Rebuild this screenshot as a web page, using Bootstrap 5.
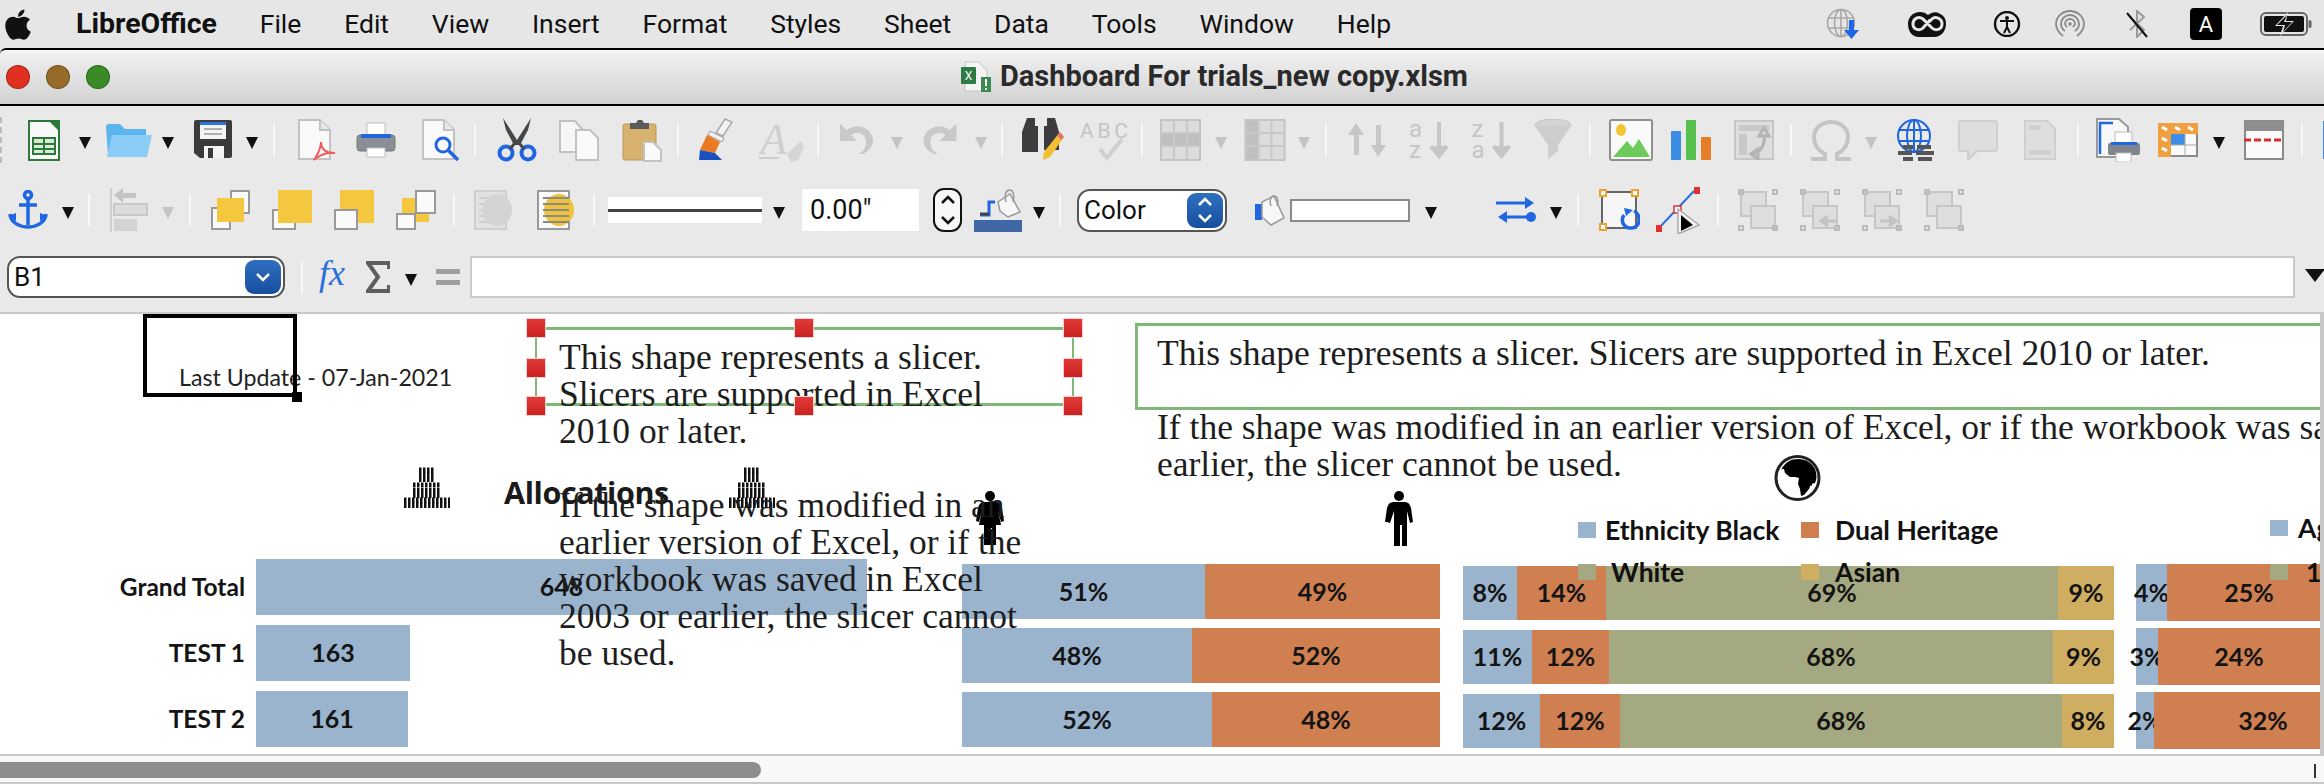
<!DOCTYPE html>
<html lang="en"><head><meta charset="utf-8"><title>Dashboard For trials_new copy.xlsm</title>
<link href="https://cdn.jsdelivr.net/npm/bootstrap@5.3.0/dist/css/bootstrap.min.css" rel="stylesheet">
<style>
html,body{margin:0;height:784px;overflow:hidden;background:#e9e9e9}
body{font-family:Roboto,"Liberation Sans",sans-serif;color:#111}
.mac-bar{height:48px;background:#e6e6e6;padding-left:5px;font-size:26.5px;position:relative}
.mac-bar .apple{margin-right:45px}
.menu-items{gap:42.8px;line-height:48px}
.brand-name{font-weight:700;font-size:28.500px}
.tray{position:absolute;top:0;right:0;height:48px;display:grid;grid-template-columns:81px 86px 62px 70px 65px 70px 64px;align-items:center}
.win-title{height:58px;border-top:2px solid #000;border-bottom:2px solid #000;background:linear-gradient(#f6f6f6 0,#efefef 8%,#d2d2d2 100%);padding-left:6px;border-top-left-radius:6px}
.win-title .lights{gap:16px;margin-right:851px}
.dot{width:24px;height:24px;border-radius:50%;border:1px solid rgba(0,0,0,.25)}
.dot-r{background:#e0301f}.dot-y{background:#966b29}.dot-g{background:#3a8a26}
.doc-name{font-size:29px;font-weight:700;color:#2a2a2a;margin-left:8px;white-space:nowrap}
.tbar{display:grid;align-items:center;justify-items:start;background:#e9e9e9}
.tbar-a{height:68px;grid-template-columns:28px 51px 27px 56px 32px 52px 27px 25px 58px 66px 52px 23px 62px 63px 55px 21px 61px 58px 21px 53px 31px 53px 26px 21px 58px 61px 19px 55px 29px 54px 27px 23px 61px 62px 63px 55px 20px 62px 63px 56px 20px 55px 31px 62px 66px 53px 19px 62px 55px 31px 57px 22px 1px}
.tbar-b{height:72px;padding-left:8px;grid-template-columns:54px 26px 22px 52px 27px 22px 61px 62px 62px 57px 21px 63px 56px 15px 165px 29px 131px 41px 59px 26px 18px 177px 36px 135px 71px 54px 27px 22px 57px 61px 21px 62px 62px 62px 41px}
.tbar-c{height:66px;padding-left:7px;padding-bottom:4px;grid-template-columns:294px 18px 47px 39px 31px 34px 1835px 19px}
.grip{width:2px;height:46px;border-left:2px dashed #bbb}
.sep{width:2px;height:32px;background:#f8f8f8;display:block}
.drop{width:0;height:0;border-left:6.5px solid transparent;border-right:6.5px solid transparent;border-top:12px solid #111;display:block;margin-top:6px}
.drop.is-off{border-top-color:#c4c4c4}
.drop.is-big{border-left-width:10px;border-right-width:10px;border-top-width:13px;margin-top:-4px}
.line-pick{width:154px;height:26px;background:#fff;display:flex;align-items:center}
.line-pick i{display:block;width:100%;height:3px;background:#444}
.num-field{width:117px;height:42px;background:#fff;font-size:27px;line-height:42px;padding-left:8px}
.spin{width:29px;height:44px;border:2px solid #111;border-radius:11px;background:#f7f7f7}
.pick-box{width:278px;height:42px;border:2px solid #555;border-radius:13px;background:#fff;font-size:26px;padding-left:5px;position:relative;display:flex;align-items:center}
.pick-color{width:150px;height:43px}
.pick-btn{position:absolute;right:2px;top:2px;bottom:2px;width:36px;background:linear-gradient(#2f6fc0,#174f9e);border-radius:9px;display:flex;align-items:center;justify-content:center}
.color-well{width:120px;height:23px;background:#fff;border:2px solid #8a8a8a}
.fx-field{width:1825px;height:42px;background:#fff;border:2px solid #c9c9c9;border-radius:0}
.sheet{height:442px;background:#fff;border-top:2px solid #c8c8c8;border-right:4px solid #c8c8c8;position:relative;overflow:hidden;color:#1a1a1a}
.hscroll{height:30px;background:#f8f8f8;border-top:2px solid #c8c8c8;border-bottom:2px solid #c8c8c8;padding-top:6px;position:relative}
.hscroll-thumb{width:761px;height:16px;background:#8e8e8e;border-radius:0 8px 8px 0}
.hscroll-end{position:absolute;right:8px;top:8px;width:2px;height:14px;background:#333}
.cal{font-family:Lato,"Open Sans",sans-serif}
.upd-box{position:absolute;left:143px;top:0;width:154px;height:83px;border:4px solid #000}
.upd-grip{position:absolute;left:292px;top:78px;width:10px;height:10px;background:#000}
.upd-text{position:absolute;left:179px;top:50px;font-size:23.2px;line-height:26px;white-space:nowrap;color:#222}
.rte{font-family:"Liberation Serif",serif;font-size:35.500px;line-height:37px;position:absolute;white-space:nowrap;color:#1d1d1d}
.rte-a{left:559px;top:25px}
.rte-b{left:1157px;top:21px}
.slicer-frame{position:absolute;border:3px solid #80b878;pointer-events:none}
.frame-a{left:535px;top:13px;width:539px;height:79px;border-left-width:2px;border-right-width:2px}
.frame-b{left:1135px;top:9px;width:1300px;height:87px}
.knob{position:absolute;width:20px;height:20px;background:linear-gradient(#e23a36,#c92222);border:1px solid #f7d0d0}
.kx1{left:526px}.kx2{left:794px}.kx3{left:1063px}
.ky1{top:4px}.ky2{top:44px}.ky3{top:82px}
.alloc-head{position:absolute;left:504px;top:158px;font-family:"Open Sans",sans-serif;font-weight:700;font-size:30.5px;line-height:40px;letter-spacing:-.4px}
.glyph{position:absolute}
.g-p1{left:404px;top:153px}.g-p2{left:729px;top:153px}.g-f{left:976px;top:177px}.g-m{left:1385px;top:177px}.g-w{left:1774px;top:141px}
.legend-item{position:absolute;display:flex;align-items:center;font-family:Lato,sans-serif;font-weight:700;font-size:26.5px;line-height:28px;white-space:nowrap;color:#111}
.swatch{width:18px;height:16px;display:block;flex:none}
.l1{left:1578px;top:202px;gap:9px}.l2{left:1801px;top:202px;gap:16px}.l3{left:1578px;top:244px;gap:15px}.l4{left:1801px;top:244px;gap:16px}.l5{left:2270px;top:200px;gap:10px}.l6{left:2270px;top:244px;gap:18px}
.c-blue{background:#9ab4ce}.c-orange{background:#d08050}.c-green{background:#a5a982}.c-gold{background:#cfae62}
.chart{position:absolute;display:flex;flex-direction:column;font-family:Lato,sans-serif;font-weight:700;font-size:25px;color:#141414}
.ch-alloc{left:256px;top:245px;gap:10px}
.ch-gender{left:962px;top:250px;gap:9px}
.ch-eth{left:1463px;top:252px;gap:10px}
.ch-age{left:2136px;top:250px;gap:7px}
.bar-row{display:flex;position:relative}
.ch-alloc .bar-row{height:56px}.ch-gender .bar-row{height:55px}.ch-eth .bar-row{height:54px}.ch-age .bar-row{height:57px}
.seg{display:flex;align-items:center;justify-content:center;white-space:nowrap;flex:none;height:100%}
.row-tag{position:absolute;right:100%;margin-right:11px;top:0;height:100%;display:flex;align-items:center;white-space:nowrap;font-size:24.5px}
</style></head>
<body>
<header class="mac-bar d-flex align-items-center">
 <svg class="apple" width="26" height="31" viewBox="0 0 384 450"><path fill="#111" transform="translate(0,-30)" d="M318.7 268.7c-.2-36.7 16.4-64.4 50-84.8-18.8-26.9-47.2-41.7-84.7-44.6-35.5-2.8-74.3 20.7-88.5 20.7-15 0-49.4-19.7-76.4-19.7C63.3 141.2 4 184.8 4 273.5q0 39.3 14.4 81.2c12.8 36.7 59 126.7 107.2 125.2 25.2-.6 43-17.9 75.8-17.9 31.8 0 48.3 17.9 76.4 17.9 48.6-.7 90.4-82.5 102.6-119.3-65.2-30.7-61.7-90-61.7-91.9zm-56.6-164.2c27.3-32.4 24.8-61.9 24-72.5-24.1 1.4-52 16.4-67.9 34.9-17.5 19.8-27.8 44.3-25.6 71.9 26.1 2 49.9-11.4 69.5-34.3z"/></svg>
 <nav class="menu-items d-flex">
  <span class="brand-name">LibreOffice</span><span>File</span><span>Edit</span><span>View</span><span>Insert</span><span>Format</span><span>Styles</span><span>Sheet</span><span>Data</span><span>Tools</span><span>Window</span><span>Help</span>
 </nav>
 <div class="tray">
  <svg width="33" height="32" viewBox="0 0 33 32"><g fill="none" stroke="#a8a8a8" stroke-width="1.6"><circle cx="15" cy="15" r="13.5"/><ellipse cx="15" cy="15" rx="6.5" ry="13.5"/><path d="M2 10h26M2 20h26M15 1v28"/></g><path d="M23 12h5v10h5l-7.500 9-7.500-9h5z" fill="#1f66e5"/></svg>
  <svg width="40" height="30" viewBox="0 0 40 30"><path fill="#111" d="M13 3a11 11 0 0 1 8 3 11 11 0 0 1 18 9c0 7-5 13-12 13H12C5 28 1 22 1 15S6 3 13 3z"/><path fill="none" stroke="#e6e6e6" stroke-width="3" d="M23 11l-7 8c-3 3-10 2-10-4 0-6 6-8 10-5l9 9c3 3 10 2 10-4 0-6-7-8-10-5l-3 3"/></svg>
  <svg width="28" height="26" viewBox="0 0 28 26"><circle cx="14" cy="13" r="12" fill="none" stroke="#111" stroke-width="2.4"/><circle cx="14" cy="7" r="2" fill="#111"/><path d="M7 10h14M14 10v6l-3 6M14 16l3 6" stroke="#111" stroke-width="2" fill="none"/></svg>
  <svg width="30" height="28" viewBox="0 0 30 28"><g fill="none" stroke="#8a8a8a" stroke-width="1.8"><path d="M8 26C3 22 1 18 1 14a14 13 0 0 1 28 0c0 4-2 8-7 12"/><path d="M10 21c-3-2-4-5-4-7a9 9 0 0 1 18 0c0 2-1 5-4 7"/><path d="M12 17c-1-1-2-2-2-3a5 5 0 0 1 10 0c0 1-1 2-2 3"/></g><circle cx="15" cy="14" r="1.800" fill="#8a8a8a"/></svg>
  <svg width="24" height="28" viewBox="0 0 24 28"><path d="M5 7l14 13-7 7V1l7 6L5 20" fill="none" stroke="#9a9a9a" stroke-width="2"/><path d="M2 3l20 24" stroke="#111" stroke-width="2"/></svg>
  <svg width="32" height="32" viewBox="0 0 32 32"><rect width="32" height="32" rx="4" fill="#000"/><text x="16" y="24" fill="#fff" font-size="22" text-anchor="middle" font-family="Roboto">A</text></svg>
  <svg width="52" height="24" viewBox="0 0 52 24"><rect x="1" y="1" width="46" height="22" rx="5" fill="none" stroke="#666" stroke-width="2"/><rect x="4" y="4" width="40" height="16" rx="2" fill="#111"/><rect x="48.500" y="8" width="3" height="8" rx="1.500" fill="#666"/><path d="M28 0L15 14h8l-3 10 14-15h-8z" fill="#e6e6e6"/><path d="M27 3l-10 10h8l-2 7 9-10h-8z" fill="#111"/></svg>
 </div>
</header>
<div class="win-title d-flex align-items-center">
 <div class="lights d-flex"><span class="dot dot-r"></span><span class="dot dot-y"></span><span class="dot dot-g"></span></div>
 <svg width="31" height="32" viewBox="0 0 31 32"><path d="M4 1h14l8 9v20H4z" fill="#f4f4f4" stroke="#c4c4c4"/><rect y="6" width="15" height="17" rx="1" fill="#2d7a44"/><text x="7.500" y="19" fill="#fff" font-size="12" text-anchor="middle" font-family="Roboto">X</text><rect x="20" y="16" width="10" height="15" fill="#3d8a50"/><path d="M25 18v7M25 27v2" stroke="#fff" stroke-width="2"/></svg>
 <span class="doc-name">Dashboard For trials_new copy.xlsm</span>
</div>

<!-- first toolbar -->
<div class="tbar tbar-a">
 <span class="grip"></span>
 <svg width="32" height="41" viewBox="0 0 32 41"><path d="M1 1h22l8 8v31H1z" fill="#f8f8f8" stroke="#2b7a3a" stroke-width="2"/><path d="M20 0h12v12z" fill="#2b7a3a"/><path d="M5 18h22v16H5z" fill="#d9ead6" stroke="#2b7a3a" stroke-width="2"/><path d="M5 24h22M5 29h22M16 18v16" stroke="#2b7a3a" stroke-width="2"/></svg>
 <span class="drop"></span>
 <svg width="46" height="34" viewBox="0 0 46 34"><path d="M0 4a3 3 0 0 1 3-3h11l5 5h21v26H2z" fill="#5db5f0"/><path d="M6 12h40l-5 22H1z" fill="#8ccdf8"/></svg>
 <span class="drop"></span>
 <svg width="38" height="40" viewBox="0 0 38 40"><path d="M2 0h34a2 2 0 0 1 2 2v34a2 2 0 0 1-2 2H6l-6-5V2a2 2 0 0 1 2-2z" fill="#3b3b3b"/><rect x="6" y="2" width="26" height="17" fill="#f4f4f4"/><rect x="6" y="2" width="26" height="3" fill="#2c74dc"/><path d="M10 9h18M10 14h18" stroke="#999" stroke-width="1.500"/><rect x="10" y="26" width="20" height="12" fill="#f4f4f4"/><rect x="14" y="28" width="5" height="10" fill="#3b3b3b"/></svg>
 <span class="drop"></span>
 <span class="sep"></span>
 <svg width="39" height="42" viewBox="0 0 39 42"><path d="M1 1h21l10 10v29H1z" fill="#fafafa" stroke="#c2c2c2" stroke-width="2"/><path d="M22 1v10h10" fill="#e8e8e8" stroke="#c2c2c2" stroke-width="2"/><path d="M16 41c4-6 7-12 7-18 0 7 5 11 14 11-8-1-14 1-21 7z" fill="none" stroke="#ee5c5c" stroke-width="2"/></svg>
 <svg width="40" height="36" viewBox="0 0 40 36"><rect x="11" y="1" width="18" height="14" fill="#fff" stroke="#c0c0c0"/><rect x="1" y="13" width="38" height="16" rx="3" fill="#8a8f96" stroke="#777"/><rect x="5" y="12" width="30" height="4" fill="#1f66e0"/><rect x="11" y="26" width="18" height="9" fill="#fff" stroke="#c0c0c0"/></svg>
 <svg width="38" height="42" viewBox="0 0 38 42"><path d="M1 1h21l10 10v29H1z" fill="#fafafa" stroke="#c2c2c2" stroke-width="2"/><path d="M22 1v10h10" fill="#e8e8e8" stroke="#c2c2c2" stroke-width="2"/><circle cx="21" cy="26" r="7" fill="none" stroke="#1f66e0" stroke-width="3"/><path d="M26 31l10 10" stroke="#1f66e0" stroke-width="3.500"/></svg>
 <span class="sep"></span>
 <svg width="40" height="44" viewBox="0 0 40 44"><path d="M6 0l14 22L34 0l-3 12-8 15h-6L9 12z" fill="#45474a"/><circle cx="9" cy="35" r="6.500" fill="none" stroke="#1f66e0" stroke-width="4"/><circle cx="31" cy="35" r="6.500" fill="none" stroke="#1f66e0" stroke-width="4"/><path d="M17 26l-4 5M23 26l4 5" stroke="#45474a" stroke-width="3"/></svg>
 <svg width="40" height="41" viewBox="0 0 40 41"><path d="M1 1h15l7 8v23H1z" fill="#f6f6f6" stroke="#c2c2c2" stroke-width="2"/><path d="M17 10h14l8 8v22H17z" fill="#fafafa" stroke="#c2c2c2" stroke-width="2"/></svg>
 <svg width="40" height="43" viewBox="0 0 40 43"><rect x="1" y="5" width="33" height="36" rx="2" fill="#dab26f" stroke="#b7975c"/><path d="M8 8V4h6l2-3h4l2 3h5v6H8z" fill="#5a5a5a"/><path d="M22 23h9l8 8v11H22z" fill="#fafafa" stroke="#c2c2c2" stroke-width="2"/></svg>
 <span class="sep"></span>
 <svg width="36" height="44" viewBox="0 0 36 44"><path d="M27 1l7 3-9 14-7-3z" fill="#f2f2f2" stroke="#aaa" stroke-width="1.500"/><path d="M12 13l14 7-2 4-14-7z" fill="#f2f2f2" stroke="#999"/><path d="M9 17l13 7-5 11-15-3z" fill="#ea7b22"/><path d="M2 32l15 3 7 7H1z" fill="#1a4fc0"/></svg>
 <svg width="45" height="44" viewBox="0 0 45 44"><text x="1" y="36" font-family="Liberation Serif" font-style="italic" font-size="44" fill="#cfcfcf">A</text><path d="M0 40h20" stroke="#ccc" stroke-width="2"/><path d="M28 36l14-13 3 6-6 13-7 2z" fill="#d4d4d4"/></svg>
 <span class="sep"></span>
 <svg width="36" height="32" viewBox="0 0 36 32"><path d="M2 0v17h17l-6-6c6-4 15-2 15 7 0 6-3 10-8 12h5c6-3 10-8 10-13C35 5 20-3 9 6z" fill="#c9c9c9"/></svg>
 <span class="drop is-off"></span>
 <svg width="37" height="32" viewBox="0 0 36 32"><path d="M34 0v17H17l6-6c-6-4-15-2-15 7 0 6 3 10 8 12h-5C5 27 1 22 1 17 1 5 16-3 27 6z" fill="#c9c9c9"/></svg>
 <span class="drop is-off"></span>
 <span class="sep"></span>
 <svg width="42" height="44" viewBox="0 0 42 44"><path d="M5 0h8v8h3v26H0V14zM25 0h8l4 14v18H22V8h3z" fill="#3c3c3e"/><path d="M38 14l4 5-14 20-7 3 1-8z" fill="#f2c032"/><path d="M38 14l4 5-3 3-4-5z" fill="#e27272"/></svg>
 <svg width="48" height="42" viewBox="0 0 48 42"><text x="0" y="19" font-family="Roboto" font-size="21" fill="#c4c4c4" textLength="48">ABC</text><path d="M20 30l7 9L42 20" fill="none" stroke="#d0d0d0" stroke-width="4"/></svg>
 <span class="sep"></span>
 <svg width="41" height="42" viewBox="0 0 41 42"><rect x="1" y="1" width="39" height="40" fill="#dcdcdc" stroke="#c4c4c4" stroke-width="2"/><rect x="2" y="14" width="37" height="13" fill="#bfbfbf"/><path d="M1 14h39M1 27h39M14 1v40M27 1v40" stroke="#c8c8c8" stroke-width="2"/></svg>
 <span class="drop is-off"></span>
 <svg width="42" height="42" viewBox="0 0 41 42"><rect x="1" y="1" width="39" height="40" fill="#dcdcdc" stroke="#c4c4c4" stroke-width="2"/><rect x="2" y="2" width="12" height="38" fill="#bfbfbf"/><path d="M1 14h39M1 27h39M14 1v40M27 1v40" stroke="#c8c8c8" stroke-width="2"/></svg>
 <span class="drop is-off"></span>
 <span class="sep"></span>
 <svg width="38" height="34" viewBox="0 0 38 34"><path d="M8 0l8 12h-5v20H6V12H0zM30 34l8-12h-5V2h-5v20h-5z" fill="#c6c6c6"/></svg>
 <svg width="40" height="40" viewBox="0 0 40 40"><text x="0" y="17" font-family="Roboto" font-size="24" fill="#c6c6c6">a</text><text x="0" y="38" font-family="Roboto" font-size="24" fill="#c6c6c6">z</text><path d="M30 2v32M22 26l8 10 8-10" stroke="#c6c6c6" stroke-width="4" fill="#c6c6c6"/></svg>
 <svg width="41" height="40" viewBox="0 0 40 40"><text x="0" y="17" font-family="Roboto" font-size="24" fill="#c6c6c6">z</text><text x="0" y="38" font-family="Roboto" font-size="24" fill="#c6c6c6">a</text><path d="M30 2v32M22 26l8 10 8-10" stroke="#c6c6c6" stroke-width="4" fill="#c6c6c6"/></svg>
 <svg width="38" height="42" viewBox="0 0 38 42"><ellipse cx="19" cy="6" rx="18" ry="6" fill="#d4d4d4" stroke="#c4c4c4"/><path d="M1 7l13 19v14l10-8V26L37 7z" fill="#cdcdcd"/></svg>
 <span class="sep"></span>
 <svg width="44" height="42" viewBox="0 0 44 42"><rect x="1" y="1" width="42" height="40" rx="2" fill="#fafafa" stroke="#8f8f8f" stroke-width="2"/><ellipse cx="12" cy="11" rx="5" ry="6" fill="#f2c531"/><path d="M4 38l14-16 6 7 6-9 11 18z" fill="#6ccb5b"/></svg>
 <svg width="40" height="41" viewBox="0 0 40 41"><rect y="11" width="10" height="29" rx="1" fill="#3a8ee6"/><rect x="15" width="10" height="40" rx="1" fill="#58c04f"/><rect x="30" y="17" width="10" height="23" rx="1" fill="#e67e28"/></svg>
 <svg width="40" height="40" viewBox="0 0 40 40"><rect x="1" y="1" width="38" height="38" fill="#dedede" stroke="#c6c6c6" stroke-width="2"/><path d="M5 5h30v6H5zM5 14h8v21H5z" fill="#c8c8c8"/><path d="M17 34c8 0 15-8 13-20M30 8l-5 8h10zM17 34l7-5v10z" fill="none" stroke="#b4b4b4" stroke-width="3"/></svg>
 <span class="sep"></span>
 <svg width="42" height="41" viewBox="0 0 42 41"><path d="M1 39h14v-5C7 30 4 23 4 17 4 8 12 2 21 2s17 6 17 15c0 6-3 13-11 17v5h14" fill="none" stroke="#c4c4c4" stroke-width="4"/></svg>
 <span class="drop is-off"></span>
 <svg width="42" height="42" viewBox="0 0 42 42"><g fill="none" stroke="#1f66e0" stroke-width="2"><circle cx="18" cy="17" r="16"/><ellipse cx="18" cy="17" rx="7" ry="16"/><path d="M2 11h32M2 22h32M18 1v32"/></g><path d="M7 28h10M21 28h14M2 34h14M20 34h18M7 40h10M22 40h14" stroke="#555" stroke-width="4"/></svg>
 <svg width="40" height="40" viewBox="0 0 40 40"><path d="M3 1h34a2 2 0 0 1 2 2v26a2 2 0 0 1-2 2H19l-9 9v-9H3a2 2 0 0 1-2-2V3a2 2 0 0 1 2-2z" fill="#dedede" stroke="#cfcfcf" stroke-width="2"/></svg>
 <svg width="32" height="40" viewBox="0 0 32 40"><path d="M1 1h22l8 8v30H1z" fill="#dedede" stroke="#cfcfcf" stroke-width="2"/><rect x="5" y="5" width="12" height="5" fill="#cfcfcf"/><rect x="5" y="30" width="22" height="5" fill="#cfcfcf"/></svg>
 <span class="sep"></span>
 <svg width="44" height="44" viewBox="0 0 44 44"><path d="M1 1h22l9 8v30H1z" fill="#f8f8f8" stroke="#9a9a9a" stroke-width="2"/><path d="M4 36V5h13" fill="none" stroke="#1f66e0" stroke-width="2.500"/><rect x="19" y="14" width="17" height="14" fill="#fff" stroke="#bbb"/><rect x="12" y="25" width="32" height="12" rx="2" fill="#80858c"/><rect x="15" y="24" width="26" height="3" fill="#1f66e0"/><rect x="20" y="35" width="15" height="9" fill="#fff" stroke="#bbb"/></svg>
 <svg width="40" height="34" viewBox="0 0 40 34"><rect x="1" y="1" width="38" height="32" fill="#fafafa" stroke="#8a8a8a" stroke-width="2"/><rect width="40" height="11" fill="#f0a040"/><rect width="13" height="34" fill="#f0a040"/><rect x="13" y="11" width="14" height="11" fill="#3d8ee8"/><path d="M4 4l5 3M17 4l5 3M30 4l5 3M4 15l5 3M4 25l5 3" stroke="#fff" stroke-width="3"/><path d="M27 11v22M13 22h26" stroke="#aaa"/></svg>
 <span class="drop"></span>
 <svg width="40" height="40" viewBox="0 0 40 40"><rect x="1" y="1" width="38" height="38" fill="#fafafa" stroke="#8a8a8a" stroke-width="2"/><rect x="1" y="1" width="38" height="10" fill="#8e8e8e"/><path d="M0 20h40" stroke="#d03030" stroke-width="3" stroke-dasharray="7 3"/></svg>
 <span class="sep"></span>
 <svg width="1" height="38" viewBox="0 0 1 38"><rect width="1" height="38" fill="#3d8ee8"/></svg>
</div>

<!-- second toolbar -->
<div class="tbar tbar-b">
 <svg width="40" height="40" viewBox="0 0 40 40"><g fill="none" stroke="#1f66e0" stroke-width="3.500"><circle cx="20" cy="5" r="3.500"/><path d="M20 9v26M11 15h18M2 24c1 9 10 13 18 13s17-4 18-13"/></g><path d="M0 26l8-3 0 8zM40 26l-8-3 0 8z" fill="#1f66e0"/></svg>
 <span class="drop"></span>
 <span class="sep"></span>
 <svg width="38" height="44" viewBox="0 0 38 44"><path d="M1 0v44" stroke="#cfcfcf" stroke-width="2"/><path d="M4 7l9-7v5h13v5H13v5z" fill="#c4c4c4"/><rect x="4" y="16" width="33" height="11" fill="#dcdcdc" stroke="#c8c8c8" stroke-width="2"/><rect x="4" y="31" width="23" height="12" fill="#d2d2d2"/></svg>
 <span class="drop is-off"></span>
 <span class="sep"></span>
 <svg width="39" height="40" viewBox="0 0 39 40"><rect x="20" y="1" width="18" height="22" fill="#fafafa" stroke="#999" stroke-width="2"/><rect x="1" y="18" width="18" height="21" fill="#fafafa" stroke="#999" stroke-width="2"/><rect x="6" y="8" width="27" height="24" fill="#f5c73f"/></svg>
 <svg width="40" height="40" viewBox="0 0 40 40"><rect x="1" y="20" width="22" height="19" fill="#fafafa" stroke="#999" stroke-width="2"/><rect x="6" width="34" height="33" fill="#f5c73f"/></svg>
 <svg width="40" height="40" viewBox="0 0 40 40"><rect x="6" width="34" height="33" fill="#f5c73f"/><rect x="1" y="20" width="22" height="19" fill="#fafafa" stroke="#999" stroke-width="2"/></svg>
 <svg width="40" height="40" viewBox="0 0 40 40"><rect x="6" y="8" width="27" height="24" fill="#f5c73f"/><rect x="20" y="1" width="19" height="22" fill="#fafafa" stroke="#999" stroke-width="2"/><rect x="1" y="24" width="18" height="15" fill="#fafafa" stroke="#999" stroke-width="2"/></svg>
 <span class="sep"></span>
 <svg width="39" height="40" viewBox="0 0 39 40"><rect x="1" y="1" width="31" height="38" fill="#e2e2e2" stroke="#cfcfcf" stroke-width="2"/><path d="M5 8h24M5 14h24M5 20h24M5 26h24M5 32h24" stroke="#cfcfcf" stroke-width="2"/><ellipse cx="23" cy="20" rx="15" ry="16" fill="#d4d4d4"/></svg>
 <svg width="38" height="40" viewBox="0 0 38 40"><rect x="1" y="1" width="31" height="38" fill="#fafafa" stroke="#999" stroke-width="2"/><ellipse cx="22" cy="20" rx="15" ry="16" fill="#f0c23a"/><path d="M6 8h26M6 14h26M6 20h26M6 26h26M6 32h26" stroke="#8a8a8a" stroke-width="2"/></svg>
 <span class="sep"></span>
 <span class="line-pick"><i></i></span>
 <span class="drop"></span>
 <span class="num-field">0.00″</span>
 <span class="spin d-flex flex-column align-items-center justify-content-around"><svg width="16" height="10" viewBox="0 0 16 10"><path d="M2 8l6-6 6 6" fill="none" stroke="#111" stroke-width="2.500"/></svg><svg width="16" height="10" viewBox="0 0 16 10"><path d="M2 2l6 6 6-6" fill="none" stroke="#111" stroke-width="2.500"/></svg></span>
 <svg width="48" height="44" viewBox="0 0 48 44"><rect y="32" width="48" height="12" fill="#3f67a5"/><path d="M6 27h9V14h6" fill="none" stroke="#1f66e0" stroke-width="3"/><path d="M6 26h9" stroke="#444" stroke-width="3"/><path d="M24 14l12-8 10 18-12 5-8-6z" fill="#f7f7f7" stroke="#999" stroke-width="1.500"/><path d="M36 2c-4 0-6 4-4 12M36 2c3 0 5 5 3 12" fill="none" stroke="#999" stroke-width="1.500"/></svg>
 <span class="drop"></span>
 <span class="sep"></span>
 <span class="pick-box pick-color">Color<span class="pick-btn"><svg width="18" height="30" viewBox="0 0 18 30"><path d="M3 10l6-6 6 6M3 20l6 6 6-6" fill="none" stroke="#fff" stroke-width="2.500"/></svg></span></span>
 <svg width="31" height="32" viewBox="0 0 31 32"><path d="M1 10h7v16H1z" fill="#1f66e0"/><path d="M8 8l12-6 10 22-13 7-9-8z" fill="#f7f7f7" stroke="#999" stroke-width="1.500"/><path d="M20 2c-3 0-5 4-3 10M20 2c3 0 5 4 3 10" fill="none" stroke="#999" stroke-width="1.500"/></svg>
 <span class="color-well"></span>
 <span class="drop"></span>
 <svg width="40" height="28" viewBox="0 0 40 28"><path d="M0 7h34" stroke="#1f66e0" stroke-width="3"/><path d="M29 1l9 6-9 6z" fill="#1f66e0"/><path d="M6 21h30" stroke="#1f66e0" stroke-width="3"/><path d="M11 15l-9 6 9 6z" fill="#1f66e0"/><circle cx="35" cy="21" r="5" fill="#1f66e0"/></svg>
 <span class="drop"></span>
 <span class="sep"></span>
 <svg width="41" height="42" viewBox="0 0 41 42"><rect x="3" y="3" width="34" height="36" fill="#f6f6f6" stroke="#666" stroke-width="2"/><g fill="#fff" stroke="#f0a030" stroke-width="2"><rect x="1" y="1" width="6" height="6"/><rect x="33" y="1" width="6" height="6"/><rect x="1" y="35" width="6" height="6"/></g><path d="M34 24c7 3 7 16-2 17-8 1-12-7-8-13" fill="none" stroke="#1f66e0" stroke-width="3.500" transform="translate(1,-2)"/><path d="M25 19l9 2-7 6z" fill="#1f66e0"/></svg>
 <svg width="45" height="47" viewBox="0 0 45 47"><path d="M2 42L38 4" stroke="#2a70e0" stroke-width="2"/><rect x="38" y="0" width="6" height="7" fill="#e03030"/><rect x="0" y="38" width="6" height="7" fill="#e03030"/><rect x="18" y="19" width="7" height="7" fill="#fff" stroke="#e03030" stroke-width="1.500"/><path d="M22 22l21 16-21 9z" fill="#f4f4f4" stroke="#aaa" stroke-width="1.500"/><path d="M25 28l12 10-12 6z" fill="#000"/></svg>
 <span class="sep"></span>
 <svg width="40" height="42" viewBox="0 0 40 42"><rect x="3" y="3" width="25" height="24" fill="#dedede" stroke="#c6c6c6" stroke-width="2"/><rect x="13" y="17" width="24" height="22" fill="#dedede" stroke="#c6c6c6" stroke-width="2"/><g fill="none" stroke="#bbb" stroke-width="2"><rect x="1" y="1" width="4" height="4"/><rect x="35" y="1" width="4" height="4"/><rect x="1" y="37" width="4" height="4"/><rect x="35" y="37" width="4" height="4"/></g></svg>
 <svg width="40" height="42" viewBox="0 0 40 42"><rect x="3" y="3" width="25" height="24" fill="#dedede" stroke="#c6c6c6" stroke-width="2"/><rect x="13" y="17" width="24" height="22" fill="#dedede" stroke="#c6c6c6" stroke-width="2"/><path d="M36 32H23M28 27l-7 5 7 5" fill="#c4c4c4" stroke="#c4c4c4" stroke-width="3"/><g fill="none" stroke="#bbb" stroke-width="2"><rect x="1" y="1" width="4" height="4"/><rect x="35" y="1" width="4" height="4"/><rect x="1" y="37" width="4" height="4"/><rect x="35" y="37" width="4" height="4"/></g></svg>
 <svg width="40" height="42" viewBox="0 0 40 42"><rect x="3" y="3" width="25" height="24" fill="#dedede" stroke="#c6c6c6" stroke-width="2"/><rect x="13" y="17" width="24" height="22" fill="#dedede" stroke="#c6c6c6" stroke-width="2"/><path d="M18 32h14M27 27l7 5-7 5" fill="#c4c4c4" stroke="#c4c4c4" stroke-width="3"/><g fill="none" stroke="#bbb" stroke-width="2"><rect x="1" y="1" width="4" height="4"/><rect x="35" y="1" width="4" height="4"/><rect x="1" y="37" width="4" height="4"/><rect x="35" y="37" width="4" height="4"/></g></svg>
 <svg width="40" height="42" viewBox="0 0 40 42"><rect x="3" y="3" width="25" height="24" fill="#dedede" stroke="#c6c6c6" stroke-width="2"/><rect x="13" y="17" width="24" height="22" fill="#dedede" stroke="#c6c6c6" stroke-width="2"/><g fill="none" stroke="#bbb" stroke-width="2"><rect x="1" y="1" width="4" height="4"/><rect x="35" y="1" width="4" height="4"/><rect x="1" y="37" width="4" height="4"/><rect x="35" y="37" width="4" height="4"/></g></svg>
</div>

<!-- formula bar -->
<div class="tbar tbar-c">
 <span class="pick-box">B1<span class="pick-btn"><svg width="16" height="12" viewBox="0 0 16 12"><path d="M2 3l6 6 6-6" fill="none" stroke="#fff" stroke-width="2.500"/></svg></span></span>
 <span class="sep"></span>
 <svg width="31" height="34" viewBox="0 0 31 34"><text x="0" y="25" font-family="Liberation Serif" font-style="italic" font-size="36" fill="#2a70d8">fx</text></svg>
 <svg width="24" height="32" viewBox="0 0 24 32"><path d="M23 8V2H2l10 14L2 30h21v-6" fill="none" stroke="#5e5e5e" stroke-width="4"/></svg>
 <span class="drop"></span>
 <svg width="24" height="16" viewBox="0 0 24 16"><path d="M0 2.500h24M0 13.500h24" stroke="#9e9e9e" stroke-width="5"/></svg>
 <div class="fx-field"></div>
 <span class="drop is-big"></span>
</div>

<main class="sheet">
 <div class="upd-text cal">Last Update - 07-Jan-2021</div>
 <div class="upd-box"></div><span class="upd-grip"></span>

 <div class="alloc-head">Allocations</div>
 <svg class="glyph g-p1" width="46" height="42" viewBox="0 0 46 42"><g fill="none" stroke="#111"><path d="M15 3h16" stroke-width="5" stroke-dasharray="2.500 1.500"/><path d="M15 10h16" stroke-width="10" stroke-dasharray="2.500 1.500"/><path d="M9 18h28" stroke-width="5" stroke-dasharray="2.500 1.500"/><path d="M9 26h28" stroke-width="10" stroke-dasharray="2.500 1.500"/><path d="M0 33h46" stroke-width="5" stroke-dasharray="2.500 1.500"/><path d="M0 38h46" stroke-width="6" stroke-dasharray="2.500 1.500"/></g></svg>
 <svg class="glyph g-p2" width="46" height="42" viewBox="0 0 46 42"><g fill="none" stroke="#111"><path d="M15 3h16" stroke-width="5" stroke-dasharray="2.500 1.500"/><path d="M15 10h16" stroke-width="10" stroke-dasharray="2.500 1.500"/><path d="M9 18h28" stroke-width="5" stroke-dasharray="2.500 1.500"/><path d="M9 26h28" stroke-width="10" stroke-dasharray="2.500 1.500"/><path d="M0 33h46" stroke-width="5" stroke-dasharray="2.500 1.500"/><path d="M0 38h46" stroke-width="6" stroke-dasharray="2.500 1.500"/></g></svg>

 <div class="chart ch-alloc">
  <div class="bar-row"><span class="row-tag">Grand Total</span><span class="seg c-blue" style="width:611px">648</span></div>
  <div class="bar-row"><span class="row-tag">TEST 1</span><span class="seg c-blue" style="width:154px">163</span></div>
  <div class="bar-row"><span class="row-tag">TEST 2</span><span class="seg c-blue" style="width:152px">161</span></div>
 </div>
 <div class="chart ch-gender">
  <div class="bar-row"><span class="seg c-blue" style="width:243px">51%</span><span class="seg c-orange" style="width:235px">49%</span></div>
  <div class="bar-row"><span class="seg c-blue" style="width:230px">48%</span><span class="seg c-orange" style="width:248px">52%</span></div>
  <div class="bar-row"><span class="seg c-blue" style="width:250px">52%</span><span class="seg c-orange" style="width:228px">48%</span></div>
 </div>
 <div class="chart ch-eth">
  <div class="bar-row"><span class="seg c-blue" style="width:54px">8%</span><span class="seg c-orange" style="width:89px">14%</span><span class="seg c-green" style="width:452px">69%</span><span class="seg c-gold" style="width:56px">9%</span></div>
  <div class="bar-row"><span class="seg c-blue" style="width:69px">11%</span><span class="seg c-orange" style="width:77px">12%</span><span class="seg c-green" style="width:444px">68%</span><span class="seg c-gold" style="width:61px">9%</span></div>
  <div class="bar-row"><span class="seg c-blue" style="width:77px">12%</span><span class="seg c-orange" style="width:80px">12%</span><span class="seg c-green" style="width:442px">68%</span><span class="seg c-gold" style="width:52px">8%</span></div>
 </div>
 <div class="chart ch-age">
  <div class="bar-row"><span class="seg c-blue" style="width:31px">4%</span><span class="seg c-orange" style="width:164px">25%</span></div>
  <div class="bar-row"><span class="seg c-blue" style="width:22px">3%</span><span class="seg c-orange" style="width:162px">24%</span></div>
  <div class="bar-row"><span class="seg c-blue" style="width:18px">2%</span><span class="seg c-orange" style="width:218px">32%</span></div>
 </div>

 <svg class="glyph g-f" width="28" height="54" viewBox="0 0 28 54"><circle cx="14" cy="5" r="5" fill="#000"/><path d="M8 11h12c3 0 5 2 6 6l2 13-3 1-3-12 3 15h-5v20h-4V37h-1v17H8V34H3l3-15-3 12-3-1 2-13c1-4 3-6 6-6z" fill="#000"/></svg>
 <svg class="glyph g-m" width="28" height="55" viewBox="0 0 28 55"><circle cx="14" cy="5" r="5" fill="#000"/><path d="M8 11h12c3 0 5 2 6 6l2 14-3 1-3-12v35h-5V34h-2v21H9V20L5 32l-3-1L0 31l2-14c1-4 3-6 6-6z" fill="#000"/></svg>
 <svg class="glyph g-w" width="47" height="46" viewBox="0 0 47 46"><circle cx="23.500" cy="23" r="21.500" fill="#fff" stroke="#222" stroke-width="3"/><path d="M7 15C11 7 17 4 24 4c8 0 14 4 17 10 2 5 2 10 0 14l-4 1-2 5-5 6-3 1-1-7-2-5 1-6-4-1-5 0-5-4-1-4-3 0zM36 30l2-2v3z" fill="#000"/></svg>

 <div class="legend-item l1"><span class="swatch c-blue"></span>Ethnicity Black</div>
 <div class="legend-item l2"><span class="swatch c-orange"></span>Dual Heritage</div>
 <div class="legend-item l3"><span class="swatch c-green"></span>White</div>
 <div class="legend-item l4"><span class="swatch c-gold"></span>Asian</div>
 <div class="legend-item l5"><span class="swatch c-blue"></span>Age</div>
 <div class="legend-item l6"><span class="swatch c-green"></span>16</div>

 <div class="slicer-frame frame-a"></div>
 <div class="rte rte-a">This shape represents a slicer.<br>Slicers are supported in Excel<br>2010 or later.<br><br>If the shape was modified in an<br>earlier version of Excel, or if the<br>workbook was saved in Excel<br>2003 or earlier, the slicer cannot<br>be used.</div>
 <span class="knob kx1 ky1"></span><span class="knob kx2 ky1"></span><span class="knob kx3 ky1"></span>
 <span class="knob kx1 ky2"></span><span class="knob kx3 ky2"></span>
 <span class="knob kx1 ky3"></span><span class="knob kx2 ky3"></span><span class="knob kx3 ky3"></span>

 <div class="slicer-frame frame-b"></div>
 <div class="rte rte-b">This shape represents a slicer. Slicers are supported in Excel 2010 or later.<br><br>If the shape was modified in an earlier version of Excel, or if the workbook was saved in Excel 2003 or<br>earlier, the slicer cannot be used.</div>
</main>
<div class="hscroll"><div class="hscroll-thumb"></div><span class="hscroll-end"></span></div>
</body></html>
